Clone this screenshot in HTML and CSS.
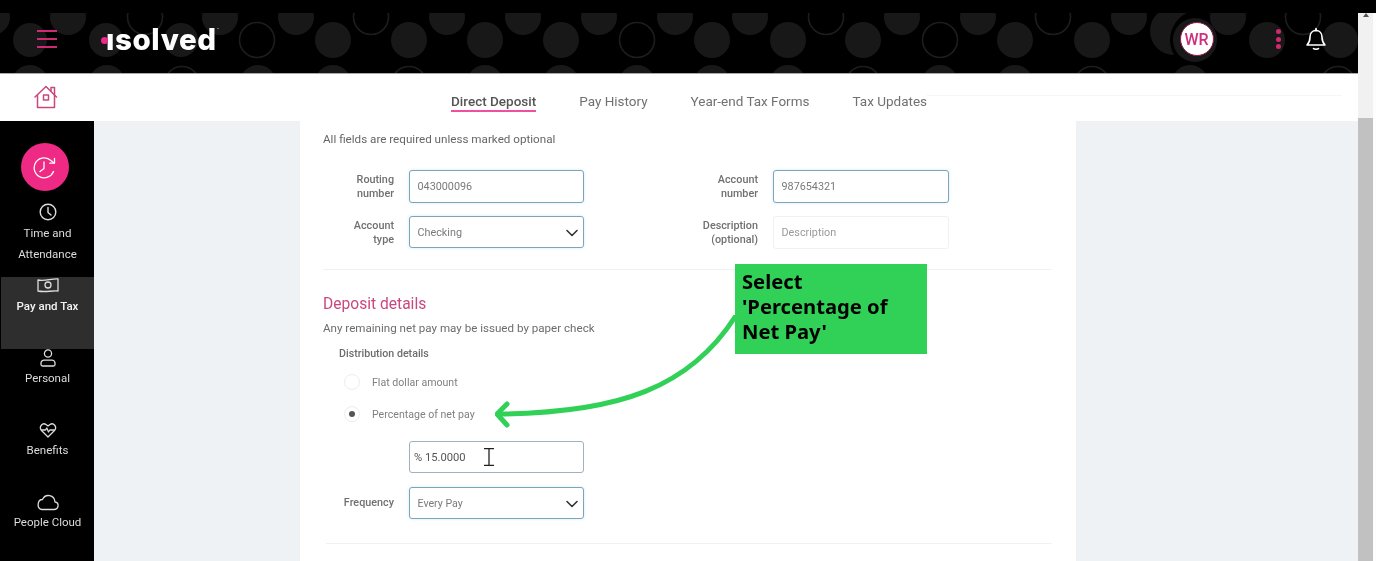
FILE: index.html
```html
<!DOCTYPE html>
<html lang="en">
<head>
<meta charset="utf-8">
<title>Direct Deposit</title>
<link rel="stylesheet" href="styles.css">
</head>
<body>
<div class="page">
  <div class="topband"></div>
  <div class="shell">
    <div class="app">
      <header class="header">
        <svg class="pattern" viewBox="0 0 1358 60" width="1358" height="60" aria-hidden="true">
          <g class="dots">
            <circle cx="-8" cy="4" r="18"/><circle cx="68" cy="4" r="18"/><circle cx="220" cy="4" r="18"/><circle cx="296" cy="4" r="18"/><circle cx="447" cy="4" r="18"/><circle cx="523" cy="4" r="18"/><circle cx="599" cy="4" r="18"/><circle cx="675" cy="4" r="18"/><circle cx="750" cy="4" r="18"/><circle cx="902" cy="4" r="18"/><circle cx="978" cy="4" r="18"/><circle cx="1129" cy="4" r="18"/>
            <circle cx="30" cy="27" r="17"/><circle cx="106" cy="27" r="17"/><circle cx="181" cy="27" r="17"/><circle cx="333" cy="27" r="18"/><circle cx="409" cy="27" r="18"/><circle cx="485" cy="27" r="18"/><circle cx="561" cy="27" r="18"/><circle cx="712" cy="27" r="18"/><circle cx="788" cy="27" r="18"/><circle cx="863" cy="27" r="18"/><circle cx="1015" cy="27" r="18"/><circle cx="1092" cy="27" r="18"/><circle cx="1174" cy="18" r="24"/>
            <circle class="mask" cx="1200" cy="27" r="30"/><circle cx="1195" cy="27" r="22"/><circle cx="1228" cy="4" r="18"/><circle cx="1267" cy="27" r="18"/><circle cx="1340" cy="27" r="18"/>
            <circle cx="30" cy="70" r="18"/><circle cx="107" cy="70" r="18"/><circle cx="258" cy="70" r="18"/><circle cx="333" cy="70" r="18"/><circle cx="485" cy="70" r="18"/><circle cx="561" cy="70" r="18"/><circle cx="637" cy="70" r="18"/><circle cx="712" cy="70" r="18"/><circle cx="788" cy="70" r="18"/><circle cx="940" cy="70" r="18"/><circle cx="1015" cy="70" r="18"/><circle cx="1190" cy="70" r="18"/>
          </g>
          <g class="rings">
            <circle cx="145" cy="4" r="17.5"/><circle cx="371" cy="4" r="17.5"/><circle cx="826" cy="4" r="17.5"/><circle cx="1053" cy="4" r="17.5"/><circle cx="1303" cy="4" r="17.5"/>
            <circle cx="257" cy="27" r="17.5"/><circle cx="637" cy="27" r="17.5"/><circle cx="940" cy="27" r="17.5"/>
            <circle cx="182" cy="71" r="17.5"/><circle cx="409" cy="71" r="17.5"/><circle cx="863" cy="71" r="17.5"/><circle cx="1092" cy="71" r="17.5"/><circle cx="1338" cy="71" r="17.5"/>
          </g>
        </svg>
        <div class="header-left">
          <span class="burger"><i></i><i></i><i></i></span>
          <span class="logo"><b class="logo-dot"></b><span class="logo-word">ısolved</span><sup class="logo-tm">™</sup></span>
        </div>
        <div class="header-right">
          <span class="avatar">WR</span>
          <span class="kebab"><i></i><i></i><i></i></span>
          <svg class="bell" viewBox="0 0 24 26" width="24" height="26" fill="none" stroke="#fff" stroke-width="1.6" stroke-linejoin="round" stroke-linecap="round" aria-hidden="true">
            <path d="M12 2.500v2M12 4.500c-3.800 0-6 3-6 6.500 0 4-1.200 6.200-3 8h18c-1.800-1.800-3-4-3-8 0-3.500-2.200-6.500-6-6.500z"/>
            <path d="M9.500 22.500c.8 1 4.200 1 5 0"/>
          </svg>
        </div>
      </header>
      <div class="subheader">
        <svg class="home" viewBox="0 0 24 24" width="24" height="24" fill="none" stroke="#c9477f" stroke-width="1.500" stroke-linejoin="round" stroke-linecap="round" aria-hidden="true">
          <path d="M1 12 12 1.500l10.500 10.500"/><path d="M17 6V2.500h3.500V10"/><path d="M3.500 10.500V22.500h17V10.500"/><rect x="9.500" y="10" width="5" height="5"/>
        </svg>
        <nav class="tabs">
          <span class="tab active">Direct Deposit</span>
          <span class="tab">Pay History</span>
          <span class="tab">Year-end Tax Forms</span>
          <span class="tab">Tax Updates</span>
        </nav>
        <span class="tabline"></span>
      </div>
      <div class="workspace">
        <aside class="sidebar">
          <span class="fab">
            <svg viewBox="0 0 24 24" width="24" height="24" fill="none" stroke="#fff" stroke-width="1.300" stroke-linecap="round" stroke-linejoin="round" aria-hidden="true">
              <path d="M20.500 16.500A10 10 0 1 1 18 5.500l3 2.500"/><path d="M21.500 3.500v4.700h-4.700"/><path d="M11 7v6.500l-4 3"/>
            </svg>
          </span>
          <div class="nav-item nav-first">
            <svg class="nav-icon" viewBox="0 0 18 18" width="18" height="18" fill="none" stroke="#ddd" stroke-width="1.400" stroke-linecap="round" stroke-linejoin="round" aria-hidden="true"><circle cx="9" cy="9" r="7.800"/><path d="M9 4.500V9.500l3 2.500"/></svg>
            <span class="nav-label">Time and Attendance</span>
          </div>
          <div class="nav-item nav-active">
            <svg class="nav-icon" viewBox="0 0 24 18" width="24" height="18" fill="none" stroke="#ddd" stroke-width="1.300" stroke-linejoin="round" aria-hidden="true"><path d="M2 3c6 1.500 14-1.500 20-1v12c-6-.5-14 1.500-20 0z"/><circle cx="12" cy="8" r="3"/></svg>
            <span class="nav-label">Pay and Tax</span>
          </div>
          <div class="nav-item">
            <svg class="nav-icon" viewBox="0 0 18 18" width="18" height="18" fill="none" stroke="#ddd" stroke-width="1.300" stroke-linejoin="round" aria-hidden="true"><circle cx="9" cy="4.500" r="3.600"/><path d="M3.500 17h11c1 0 1.500-.7 1.500-1.500V14c0-1.500-1.500-2.800-3-2.800H5c-1.500 0-3 1.300-3 2.800v1.500C2 16.300 2.500 17 3.500 17z"/></svg>
            <span class="nav-label">Personal</span>
          </div>
          <div class="nav-item">
            <svg class="nav-icon" viewBox="0 0 18 18" width="18" height="18" fill="none" stroke="#ddd" stroke-width="1.300" stroke-linejoin="round" stroke-linecap="round" aria-hidden="true"><path d="M9 16 2.500 9.500C-.5 6 3.500 1 7 3.500L9 5l2-1.500C14.500 1 18.500 6 15.500 9.500z"/><path d="M2.500 9h4l1.300-2 1.700 4 1.300-2h4.500"/></svg>
            <span class="nav-label">Benefits</span>
          </div>
          <div class="nav-item">
            <svg class="nav-icon" viewBox="0 0 24 18" width="24" height="18" fill="none" stroke="#ddd" stroke-width="1.300" stroke-linejoin="round" aria-hidden="true"><path d="M6 16.500h12c5 0 5.500-7 1-7.500-.5-7-9.500-9-12.500-2.500C1 6.500.5 16.500 6 16.500z"/></svg>
            <span class="nav-label">People Cloud</span>
          </div>
        </aside>
        <main class="main">
          <section class="card">
            <p class="hint">All fields are required unless marked optional</p>
            <div class="grid">
              <label class="field-label">Routing<br>number</label>
              <div class="input focus">043000096</div>
              <label class="field-label">Account<br>number</label>
              <div class="input focus">987654321</div>
              <label class="field-label">Account<br>type</label>
              <div class="input focus select">Checking
                <svg class="chev" viewBox="0 0 12 8" width="12" height="8" fill="none" stroke="#333" stroke-width="1.600" stroke-linecap="round" stroke-linejoin="round" aria-hidden="true"><path d="M1 1.500 6 6.500l5-5"/></svg>
              </div>
              <label class="field-label">Description<br>(optional)</label>
              <div class="input blank">Description</div>
            </div>
            <hr class="rule rule-a">
            <h2 class="title">Deposit details</h2>
            <p class="sub">Any remaining net pay may be issued by paper check</p>
            <p class="dist">Distribution details</p>
            <div class="radio-row first"><span class="radio"></span><span class="radio-text">Flat dollar amount</span></div>
            <div class="radio-row"><span class="radio on"></span><span class="radio-text">Percentage of net pay</span></div>
            <div class="row-solo">
              <div class="input pct">% 15.0000</div>
            </div>
            <div class="row-freq">
              <label class="field-label single">Frequency</label>
              <div class="input focus select freq">Every Pay
                <svg class="chev" viewBox="0 0 12 8" width="12" height="8" fill="none" stroke="#333" stroke-width="1.600" stroke-linecap="round" stroke-linejoin="round" aria-hidden="true"><path d="M1 1.500 6 6.500l5-5"/></svg>
              </div>
            </div>
            <hr class="rule rule-b">
          </section>
        </main>
      </div>
    </div>
    <div class="scrollbar"><span class="arrow"></span><span class="thumb"></span></div>
  </div>
  <svg class="cursor" viewBox="0 0 10 18" width="10" height="18" fill="none" stroke="#222" stroke-width="1.300" aria-hidden="true"><path d="M0 .7h10M0 17.300h10M5 .7v16.600"/></svg>
  <svg class="arrow-art" viewBox="0 0 250 120" width="250" height="120" fill="none" stroke="#31d158" stroke-width="5" stroke-linecap="round" stroke-linejoin="round" aria-hidden="true">
    <path d="M240 2C195 72 125 98 3 99"/><path d="M12 89 2 99l10 11"/>
  </svg>
  <div class="callout">Select<br>'Percentage of<br>Net Pay'</div>
</div>
</body>
</html>
```
FILE: styles.css
```css
* { box-sizing: border-box; }
html, body { margin: 0; height: 100%; background: #000; }
body { overflow: hidden; font-family: Roboto, "Liberation Sans", sans-serif; }
.page { position: relative; width: 1376px; height: 561px; overflow: hidden; filter: blur(.5px); background: #000; }
.topband { height: 13px; background: #000; }
.shell { display: flex; height: 548px; background: #fdfdfd; }
.app { width: 1358px; display: flex; flex-direction: column; }

.header { position: relative; height: 61px; flex: none; background: #000; border-bottom: 1px solid #a9a9a9; display: flex; justify-content: space-between; align-items: flex-start; }
.pattern { position: absolute; left: 0; top: 0; display: block; }
.dots circle { fill: #181818; }
.dots .mask { fill: #000; }
.rings circle { fill: none; stroke: #1d1d1d; stroke-width: 1.600; }
.header-left, .header-right { position: relative; display: flex; align-items: center; height: 52px; }
.header-left { padding-left: 37px; }
.burger { display: flex; flex-direction: column; gap: 6px; width: 20px; }
.burger i { display: block; height: 2px; background: #d02a76; }
.logo { display: flex; align-items: center; margin-left: 44px; color: #fff; }
.logo-dot { width: 7px; height: 7px; border-radius: 50%; background: #f0268a; margin-right: -2px; margin-top: 3px; position: relative; z-index: 1; }
.logo-word { font-family: Inter, sans-serif; font-weight: 800; font-size: 29.500px; line-height: 34px; letter-spacing: .6px; }
.logo-tm { font-size: 4px; align-self: flex-start; margin-top: 5px; color: #ccc; }
.header-right { padding-right: 30px; }
.avatar { width: 34px; height: 34px; border-radius: 50%; background: #fff; color: #cf2f7c; border: 1px solid #8c1c50; font-size: 16px; font-weight: 500; display: flex; align-items: center; justify-content: center; }
.kebab { display: flex; flex-direction: column; gap: 2.500px; margin-left: 62.500px; }
.kebab i { width: 5px; height: 5px; border-radius: 50%; background: #d1296f; }
.bell { margin-left: 23px; }

.subheader { height: 47px; flex: none; background: #fff; display: flex; align-items: flex-start; position: relative; }
.home { margin: 11px 0 0 34px; flex: none; }
.tabs { display: flex; gap: 43px; margin-left: 393px; padding-top: 18px; }
.tab { font-size: 13.500px; line-height: 18px; height: 20px; color: #717171; white-space: nowrap; }
.tab.active { color: #555; font-weight: 500; border-bottom: 2px solid #f04ea0; }
.tabline { flex: 1; height: 1px; margin: 21px 16px 0 0; background: #f6f6f6; }

.workspace { flex: 1; display: flex; min-height: 0; }
.sidebar { width: 94px; flex: none; background: #000; padding-top: 22px; display: flex; flex-direction: column; overflow: hidden; }
.fab { width: 48px; height: 48px; margin-left: 21px; flex: none; border-radius: 50%; background: #ee2a84; display: flex; align-items: center; justify-content: center; }
.nav-item { height: 72px; flex: none; margin-left: 1px; display: flex; flex-direction: column; align-items: center; text-align: center; }
.nav-first { margin-top: 12px; height: 74px; }
.nav-icon { display: block; flex: none; }
.nav-label { margin-top: 1px; font-size: 11.500px; line-height: 21px; color: #dcdcdc; width: 92px; padding: 0 8px; }
.nav-first .nav-label { margin-top: 2px; }
.nav-item:last-child .nav-label { padding: 0; }
.nav-active { background: #2e2e2e; }
.nav-active .nav-label { color: #f4f4f4; font-weight: 500; padding: 0; }

.main { flex: 1; background: #eef2f5; padding: 0 282px 0 206px; min-width: 0; }
.card { height: 100%; background: #fff; padding: 9px 24px 0 23px; }
.hint { margin: 0; font-size: 11.650px; line-height: 18px; color: #666; }
.grid { display: grid; grid-template-columns: 71px 175px 159px 176px; column-gap: 15px; row-gap: 13px; margin-top: 22px; }
.field-label { font-size: 10.800px; line-height: 14px; font-weight: 500; color: #707070; text-align: right; align-self: center; white-space: nowrap; }
.input { position: relative; height: 33px; border-radius: 3px; background: #fff; border: 1px solid #b9c3c9; font-size: 10.800px; line-height: 31px; padding-left: 7.500px; color: #7a7a7a; white-space: nowrap; }
.input.focus { border: 1.500px solid #7da5ba; box-shadow: 0 0 3px rgba(130, 190, 225, .35); }
.input.select { height: 32px; }
.input.blank { border-color: #f1f1f1; color: #9a9a9a; }
.chev { position: absolute; right: 5px; top: 12px; }
.rule { border: 0; height: 1px; background: #f1f1f1; margin: 0; }
.rule-a { margin-top: 20px; }
.title { margin: 22px 0 0; font-size: 15.600px; line-height: 24px; font-weight: 400; color: #c8487f; }
.sub { margin: 3px 0 0; font-size: 11.600px; line-height: 18px; color: #6c6c6c; }
.dist { margin: 9px 0 0 16px; font-size: 10.650px; line-height: 16px; font-weight: 500; color: #6c6c6c; }
.radio-row { display: flex; align-items: center; gap: 12px; margin-top: 14px; padding-left: 21px; height: 18px; }
.radio-row.first { margin-top: 11px; }
.radio { width: 16px; height: 16px; border-radius: 50%; border: 1px solid #ededed; display: flex; align-items: center; justify-content: center; }
.radio.on::after { content: ""; width: 6px; height: 6px; border-radius: 50%; background: #555; }
.radio-text { font-size: 10.600px; color: #808080; }
.row-solo { margin: 18px 0 0 86px; width: 175px; }
.input.pct { height: 32px; padding-left: 4px; font-size: 11.200px; color: #555; border: 1.500px solid #9fb3bf; }
.row-freq { display: flex; align-items: center; gap: 15px; margin-top: 14px; }
.field-label.single { width: 71px; }
.freq { width: 175px; font-size: 10.600px; }
.rule-b { margin: 24px 0 0 3px; }

.scrollbar { width: 15px; flex: none; background: #f1f1f1; display: flex; flex-direction: column; position: relative; }
.arrow { display: block; width: 0; height: 0; margin: 0 auto; border: 3px solid transparent; border-top: 0; border-bottom: 4px solid #555; }
.thumb { display: block; margin-top: 101px; flex: 1; background: #c1c1c1; }

.cursor { position: absolute; left: 484px; top: 448px; }
.arrow-art { position: absolute; left: 495px; top: 315px; }
.callout { position: absolute; left: 735px; top: 264px; width: 192px; height: 90px; padding: 5px 7px; background: #31d158; color: #000; font-family: "Noto Sans", sans-serif; font-weight: 700; font-size: 20.200px; line-height: 25px; white-space: nowrap; }
```
